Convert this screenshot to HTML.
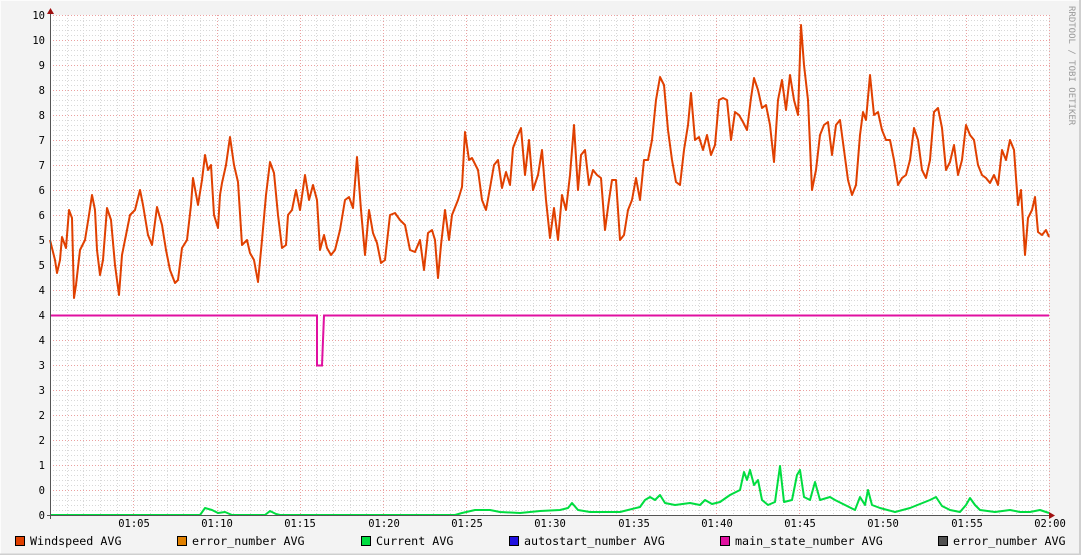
<!DOCTYPE html>
<html><head><meta charset="utf-8"><style>
html,body{margin:0;padding:0;background:#f3f3f3;}
svg{display:block;}
text{font-family:"DejaVu Sans Mono","Liberation Mono",monospace;font-size:10.5px;fill:#000;}
.lg{font-size:11.7px;}
</style></head><body>
<svg width="1081" height="555" xmlns="http://www.w3.org/2000/svg">
<rect x="0" y="0" width="1081" height="555" fill="#f3f3f3"/>
<path d="M0.5 554.5V0.5H1080.5" stroke="#fcfcfc" fill="none"/>
<path d="M1080 0V554.5H0" stroke="#cfcfcf" stroke-width="2" fill="none"/>
<rect x="50" y="15" width="999" height="500" fill="#fff"/>
<g id="grid" shape-rendering="crispEdges"></g>
<script>
(function(){
var ns="http://www.w3.org/2000/svg",g=document.getElementById("grid"),d="",dm="";
for(var i=0;i<=100;i++){var y=15+i*5+0.5;if(i%5==0)dm+="M50 "+y+"H1050";else d+="M50 "+y+"H1050";}
for(var m=1;m<=60;m++){var x=Math.round(50+m*999/60)+0.5;if(m%5==0)dm+="M"+x+" 15V515";else d+="M"+x+" 15V515";}
var p1=document.createElementNS(ns,"path");p1.setAttribute("d",d);p1.setAttribute("stroke","#d8d8d8");p1.setAttribute("stroke-dasharray","1,2");g.appendChild(p1);
var p2=document.createElementNS(ns,"path");p2.setAttribute("d",dm);p2.setAttribute("stroke","#eba0a0");p2.setAttribute("stroke-dasharray","1,2");g.appendChild(p2);
})();
</script>
<g text-anchor="end">
<text x="45" y="19">10</text><text x="45" y="44">10</text><text x="45" y="69">9</text><text x="45" y="94">8</text><text x="45" y="119">8</text><text x="45" y="144">7</text><text x="45" y="169">7</text><text x="45" y="194">6</text><text x="45" y="219">6</text><text x="45" y="244">5</text><text x="45" y="269">5</text><text x="45" y="294">4</text><text x="45" y="319">4</text><text x="45" y="344">4</text><text x="45" y="369">3</text><text x="45" y="394">3</text><text x="45" y="419">2</text><text x="45" y="444">2</text><text x="45" y="469">1</text><text x="45" y="494">0</text><text x="45" y="519">0</text>
</g>
<g text-anchor="middle">
<text x="134" y="527">01:05</text><text x="217" y="527">01:10</text><text x="300" y="527">01:15</text><text x="384" y="527">01:20</text><text x="467" y="527">01:25</text><text x="550" y="527">01:30</text><text x="634" y="527">01:35</text><text x="717" y="527">01:40</text><text x="800" y="527">01:45</text><text x="883" y="527">01:50</text><text x="967" y="527">01:55</text><text x="1050" y="527">02:00</text>
</g>
<polyline fill="none" stroke="#e04000" stroke-width="2" stroke-linejoin="round" points="50,240 55,260 57,273 60,260 62,237 66,248 69,210 72,218 74,298 76,285 80,250 85,240 89,215 92,195 95,210 97,250 100,275 103,260 107,208 111,220 115,265 119,295 122,255 126,235 130,215 135,210 140,190 143,205 148,235 152,245 157,207 162,225 166,250 170,270 175,283 178,280 182,248 187,240 191,205 193,178 198,205 202,180 205,155 208,170 211,165 214,215 218,228 220,195 222,183 226,165 230,137 234,165 238,182 242,245 247,240 250,253 254,260 258,282 262,240 266,195 270,162 274,173 278,215 282,248 286,245 288,215 292,210 296,190 300,210 305,175 309,200 313,185 317,200 320,250 324,235 327,248 331,255 335,250 340,230 345,200 349,197 353,208 357,157 361,210 365,255 369,210 373,233 377,243 381,263 385,260 390,215 395,213 400,220 405,225 410,250 415,252 420,240 424,270 428,233 432,230 435,240 438,278 441,245 445,210 449,240 452,215 458,200 462,187 465,132 469,160 472,158 478,170 482,200 486,210 490,188 494,165 498,160 502,188 506,172 510,185 513,148 518,135 521,128 525,175 529,140 533,190 538,175 542,150 546,200 550,238 554,208 558,240 562,195 566,210 570,175 574,125 578,190 581,155 585,150 589,185 593,170 597,175 601,178 605,230 609,200 612,180 616,180 620,240 624,235 628,210 632,200 636,178 640,200 644,160 648,160 652,140 656,100 660,77 664,85 668,130 672,160 676,182 680,185 684,150 688,125 691,93 695,140 699,137 703,150 707,135 711,155 715,145 719,100 723,98 727,100 731,140 735,112 739,115 743,122 747,130 751,98 754,78 758,90 762,108 766,105 770,125 774,162 778,100 782,80 786,110 790,75 794,100 798,115 801,25 804,65 808,100 812,190 816,170 820,135 824,125 828,122 832,155 836,125 840,120 844,150 848,180 852,195 856,185 860,135 863,112 866,120 870,75 874,115 878,112 882,130 886,140 890,140 894,160 898,185 902,178 906,175 910,160 914,128 918,140 922,170 926,178 930,160 934,112 938,108 942,128 946,170 950,162 954,145 958,175 962,160 966,125 970,135 974,140 978,165 982,175 986,178 990,183 994,175 998,185 1002,150 1006,160 1010,140 1014,150 1018,205 1021,190 1025,255 1028,218 1032,210 1035,197 1038,232 1042,235 1046,230 1049,237"/>
<polyline fill="none" stroke="#e010a0" stroke-width="2" points="50,315.5 317,315.5 317,365.5 322,365.5 324,315.5 1049,315.5"/>
<polyline fill="none" stroke="#00dd40" stroke-width="2" stroke-linejoin="round" points="50,515 200,515 205,508 212,510 218,513 225,512 232,515 265,515 270,511 276,514 280,515 455,515 462,513 475,510 490,510 500,512 520,513 540,511 560,510 568,508 572,503 578,510 590,512 620,512 640,507 645,500 650,497 655,500 660,495 665,503 675,505 690,503 700,505 705,500 712,504 720,502 730,495 740,490 744,472 747,480 750,470 754,485 758,480 762,500 768,505 775,502 780,466 784,502 792,500 797,475 800,470 804,497 810,500 815,482 820,500 830,497 835,500 845,505 855,510 860,497 865,505 868,490 872,505 880,508 895,512 910,508 930,500 936,497 942,506 950,510 960,512 966,505 970,498 975,505 980,510 995,512 1010,510 1020,512 1030,512 1040,510 1049,513"/>
<path d="M50.5 13V519M47 515.5H1053" stroke="#555" stroke-width="1" fill="none"/>
<path d="M47 14L50.5 8L54 14Z" fill="#a01010"/>
<path d="M1049 512L1055 515.5L1049 519Z" fill="#a01010"/>
<text transform="translate(1069,6) rotate(90)" style="font-size:9px;fill:#999">RRDTOOL / TOBI OETIKER</text>
<g stroke="#000" stroke-width="1">
<rect x="15.5" y="536.5" width="9" height="9" fill="#e04000"/>
<rect x="177.5" y="536.5" width="9" height="9" fill="#e08000"/>
<rect x="361.5" y="536.5" width="9" height="9" fill="#00dd40"/>
<rect x="509.5" y="536.5" width="9" height="9" fill="#2010e0"/>
<rect x="720.5" y="536.5" width="9" height="9" fill="#e010a0"/>
<rect x="938.5" y="536.5" width="9" height="9" fill="#505050"/>
</g>
<text class="lg" x="30" y="545">Windspeed AVG</text>
<text class="lg" x="192" y="545">error_number AVG</text>
<text class="lg" x="376" y="545">Current AVG</text>
<text class="lg" x="524" y="545">autostart_number AVG</text>
<text class="lg" x="735" y="545">main_state_number AVG</text>
<text class="lg" x="953" y="545">error_number AVG</text>
</svg>
</body></html>
